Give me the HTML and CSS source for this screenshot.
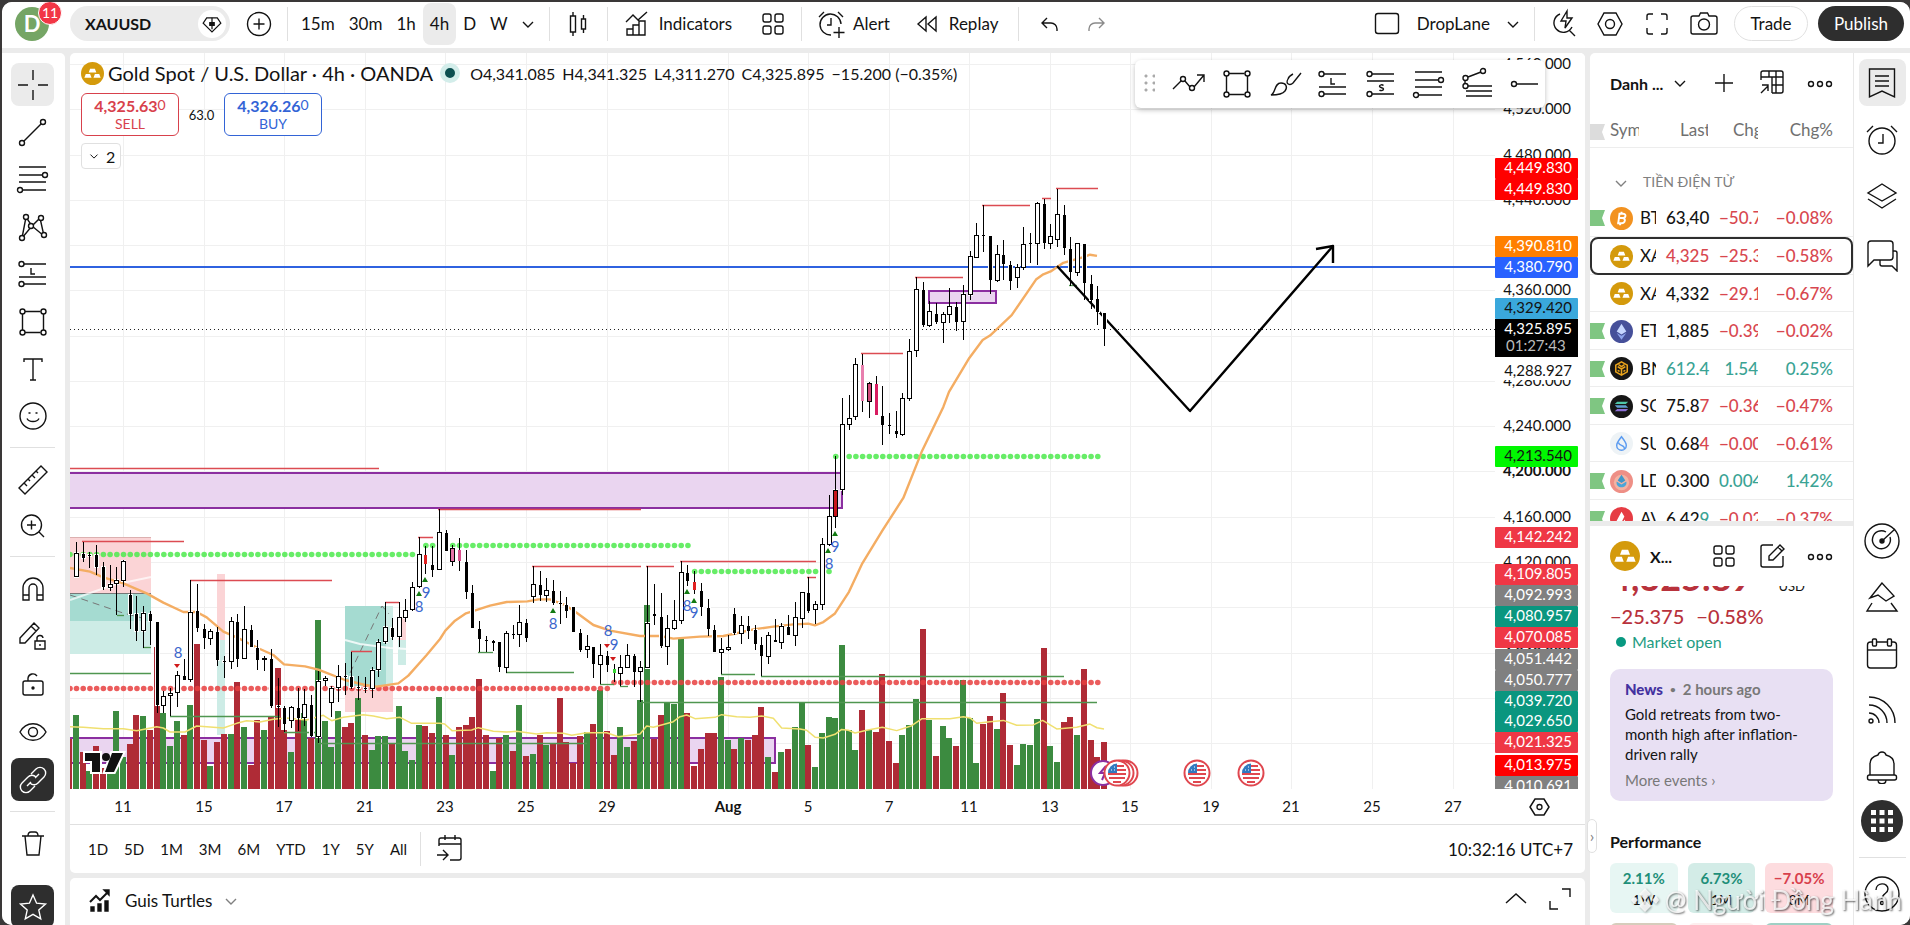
FILE: index.html
```html
<!DOCTYPE html>
<html lang="en">
<head>
    <meta charset="UTF-8">
    <meta name="viewport" content="width=device-width, initial-scale=1.0">
    <title>XAUUSD 4,325.895</title>
    <link rel="stylesheet" href="styles.css">
</head>
<body>
    <!-- Icon sprite -->
    <svg class="sprite" aria-hidden="true">
        <symbol id="i-down" viewBox="0 0 34 34"><path d="M12 15l5 5 5-5"/></symbol>
        <symbol id="i-plus-circle" viewBox="0 0 34 34"><circle cx="17" cy="17" r="11.5"/><path d="M17 11.500v11M11.500 17h11"/></symbol>
        <symbol id="i-gem" viewBox="0 0 34 34"><path d="M11 10h12l4 6-10 10L7 16z"/><path d="M17 10v13M14.500 15.500h5v3h-5z" fill="currentColor"/></symbol>
        <symbol id="i-candles" viewBox="0 0 34 34"><path d="M9.500 9h5v16h-5zM12 5v4M12 25v4M20.500 12h4v10h-4zM22.500 8v4M22.500 22v4"/></symbol>
        <symbol id="i-indicators" viewBox="0 0 34 34"><path d="M6 15l7-7 5 5 9-8M7 28v-6h6v6zM13 28V18h6v10zM19 28V14h6v14z"/></symbol>
        <symbol id="i-grid" viewBox="0 0 34 34"><rect x="7" y="7" width="8" height="8" rx="2"/><rect x="19" y="7" width="8" height="8" rx="2"/><rect x="7" y="19" width="8" height="8" rx="2"/><rect x="19" y="19" width="8" height="8" rx="2"/></symbol>
        <symbol id="i-alert" viewBox="0 0 34 34"><path d="M27 17a10.500 10.500 0 1 0-10 11M5 10l5-5M29 10l-5-5M17 11v7h-4M25 20v11M19.500 25.500h11"/></symbol>
        <symbol id="i-alarm" viewBox="0 0 34 34"><circle cx="17" cy="18" r="13"/><path d="M2 9l6-6M32 9l-6-6M18 11v9h-5"/></symbol>
        <symbol id="i-replay" viewBox="0 0 34 34"><path d="M16 10v14l-8-7zM26 10v14l-8-7z"/></symbol>
        <symbol id="i-undo" viewBox="0 0 34 34"><path d="M14 11l-5 5 5 5M9 16h9a6 6 0 0 1 6 6v2"/></symbol>
        <symbol id="i-redo" viewBox="0 0 34 34"><path d="M20 11l5 5-5 5M25 16h-9a6 6 0 0 0-6 6v2"/></symbol>
        <symbol id="i-layout" viewBox="0 0 34 34"><rect x="5.500" y="6.500" width="23" height="20" rx="2.500"/></symbol>
        <symbol id="i-quick" viewBox="0 0 34 34"><path d="M14 7a9.500 9.500 0 1 0 12 13M23 23l6 6M21 4l-6 10h5l-1 7 7-10h-5z"/></symbol>
        <symbol id="i-hex" viewBox="0 0 34 34"><path d="M11 6h12l6 11-6 11H11L5 17z"/><circle cx="17" cy="17" r="4.500"/></symbol>
        <symbol id="i-full" viewBox="0 0 34 34"><path d="M7 13V9a2 2 0 0 1 2-2h4M21 7h4a2 2 0 0 1 2 2v4M27 21v4a2 2 0 0 1-2 2h-4M13 27H9a2 2 0 0 1-2-2v-4"/></symbol>
        <symbol id="i-camera" viewBox="0 0 34 34"><path d="M12 9l1.500-3h7L22 9h6a2 2 0 0 1 2 2v14a2 2 0 0 1-2 2H6a2 2 0 0 1-2-2V11a2 2 0 0 1 2-2z"/><circle cx="17" cy="17.500" r="5.500"/></symbol>

        <symbol id="i-cross" viewBox="0 0 34 34"><path d="M17 2v10M17 22v10M2 17h10M22 17h10"/></symbol>
        <symbol id="i-trend" viewBox="0 0 34 34"><circle cx="6" cy="28" r="2.500"/><circle cx="27" cy="7" r="2.500"/><path d="M8 26L25 9"/></symbol>
        <symbol id="i-fib" viewBox="0 0 34 34"><path d="M3 5h27M3 13h24M3 20h27M6 28h24"/><circle cx="29" cy="13" r="2.500"/><circle cx="4" cy="28" r="2.500"/></symbol>
        <symbol id="i-pattern" viewBox="0 0 34 34"><path d="M6 28l4-21 6 9-10 12M16 16l8-8 4 18-12-10z"/><circle cx="6" cy="28" r="2.500" fill="#fff"/><circle cx="10" cy="7" r="2.500" fill="#fff"/><circle cx="15" cy="16" r="2.500" fill="#fff"/><circle cx="25" cy="8" r="2.500" fill="#fff"/><circle cx="28" cy="25" r="2.500" fill="#fff"/></symbol>
        <symbol id="i-long" viewBox="0 0 34 34"><path d="M8 7h22M3 20h27M8 27h22M15 11v6h4"/><circle cx="5.500" cy="7" r="2.500"/><circle cx="5.500" cy="27" r="2.500"/></symbol>
        <symbol id="i-short" viewBox="0 0 34 34"><path d="M8 7h22M3 14h27M8 27h22M19.500 18.500c-1-1-4-1-4 .800s4 1 4 2.800-3 1.800-4 .800"/><circle cx="5.500" cy="7" r="2.500"/><circle cx="5.500" cy="27" r="2.500"/></symbol>
        <symbol id="i-rect" viewBox="0 0 34 34"><path d="M9 6.500h15.500M9 27.500h15.500M6.500 9v16M27.500 9v16"/><circle cx="6.500" cy="6.500" r="2.500"/><circle cx="27.500" cy="6.500" r="2.500"/><circle cx="6.500" cy="27.500" r="2.500"/><circle cx="27.500" cy="27.500" r="2.500"/></symbol>
        <symbol id="i-text" viewBox="0 0 34 34"><path d="M8 10V7h18v3M17 7v21M14 28h6"/></symbol>
        <symbol id="i-smile" viewBox="0 0 34 34"><circle cx="17" cy="17" r="13"/><path d="M11 19.500c2 4 10 4 12 0M12.500 14h2M19.500 14h2"/></symbol>
        <symbol id="i-ruler" viewBox="0 0 34 34"><path d="M3 25L25 3l6 6L9 31zM8 20l3 3M12 16l2 2M16 12l3 3M20 8l2 2"/></symbol>
        <symbol id="i-zoom" viewBox="0 0 34 34"><circle cx="15.500" cy="16" r="10"/><path d="M23 23l5 5M15.500 11.500v9M11 16h9"/></symbol>
        <symbol id="i-magnet" viewBox="0 0 34 34"><path d="M7 28V16a10 10 0 0 1 20 0v12h-6V16a4 4 0 0 0-8 0v12zM7 23h6M21 23h6"/></symbol>
        <symbol id="i-penlock" viewBox="0 0 34 34"><path d="M4 19L18 4l5 5L9 24H4zM15 7l5 5M19 22h10v8H19zM21 22v-2a3 3 0 0 1 6-1M24 25v2"/></symbol>
        <symbol id="i-lock" viewBox="0 0 34 34"><rect x="7" y="14" width="20" height="14" rx="2"/><path d="M12 14v-3a5 5 0 0 1 9-2"/><circle cx="17" cy="21" r="1" fill="currentColor"/></symbol>
        <symbol id="i-eye" viewBox="0 0 34 34"><path d="M4 17c6-11 20-11 26 0-6 11-20 11-26 0z"/><circle cx="17" cy="17" r="4.500"/></symbol>
        <symbol id="i-link" viewBox="0 0 34 34"><path d="M15 11l5-5a5.500 5.500 0 0 1 8 8l-6 6a5.500 5.500 0 0 1-8 0M19 23l-5 5a5.500 5.500 0 0 1-8-8l6-6a5.500 5.500 0 0 1 8 0M11 23l4-4M19 15l4-4"/></symbol>
        <symbol id="i-trash" viewBox="0 0 34 34"><path d="M6 9h22M12 9c0-3 1-4 3-4h4c2 0 3 1 3 4M9 9l2 19h12l2-19"/></symbol>
        <symbol id="i-star" viewBox="0 0 34 34"><path d="M17 5l3.600 8.200 8.900.9-6.700 6 1.900 8.700L17 24.300l-7.700 4.500 1.900-8.700-6.700-6 8.900-.9z"/></symbol>

        <symbol id="i-path" viewBox="0 0 34 34"><path d="M1 22l8-8M13 14l5 6M22 20L32 8M25 8h7v7"/><circle cx="11" cy="12" r="2.500"/><circle cx="20" cy="21" r="2.500"/></symbol>
        <symbol id="i-brush" viewBox="0 0 34 34"><path d="M3 28c5-2 3-12 10-12 5 0 7 4 4 8-3 4-9 4-14 4zM20 12c-3 5 2 7 5 4l8-10M20 12c1-3 3-4 5-5"/></symbol>
        <symbol id="i-fan" viewBox="0 0 34 34"><path d="M8 10l13-5M5 13v4M8 19h24M6 24h26M6 29h26"/><circle cx="5.500" cy="11" r="2.500"/><circle cx="23" cy="4" r="2.500"/><circle cx="5.500" cy="19" r="2.500"/></symbol>
        <symbol id="i-ray" viewBox="0 0 34 34"><circle cx="6" cy="17" r="2.500"/><path d="M8.500 17H30"/></symbol>

        <symbol id="i-plus" viewBox="0 0 34 34"><path d="M17 8v18M8 17h18"/></symbol>
        <symbol id="i-table" viewBox="0 0 34 34"><path d="M6 14V7a2 2 0 0 1 2-2h18a2 2 0 0 1 2 2v18a2 2 0 0 1-2 2h-9M6 11h22M14 5v6M21 5v22M17 19h11M17 11v16M6 27l7-7M7 19h6v6"/></symbol>
        <symbol id="i-dots" viewBox="0 0 34 34"><circle cx="8" cy="18" r="2.500"/><circle cx="17" cy="18" r="2.500"/><circle cx="26" cy="18" r="2.500"/></symbol>
        <symbol id="i-edit" viewBox="0 0 34 34"><path d="M18 6H8a2 2 0 0 0-2 2v18a2 2 0 0 0 2 2h18a2 2 0 0 0 2-2V17M14 21v-4L25 6l4 4-11 11zM23 8l4 4"/></symbol>
        <symbol id="i-list" viewBox="0 0 34 34"><path d="M4.500 3h25v28l-12.500-6-12.500 6zM10 10h14M10 15h14M10 20h14"/></symbol>
        <symbol id="i-layers" viewBox="0 0 34 34"><path d="M17 3l14 9-14 8-14-8zM3 18l14 9 14-9"/></symbol>
        <symbol id="i-chat" viewBox="0 0 34 34"><path d="M3 28V6a3 3 0 0 1 3-3h19a3 3 0 0 1 3 3v13a3 3 0 0 1-3 3H9zM28 13h2a2 2 0 0 1 2 2v18l-5-5H17a2 2 0 0 1-2-2v-4"/></symbol>
        <symbol id="i-target" viewBox="0 0 36 36"><circle cx="18" cy="18" r="17"/><path d="M26 14a9 9 0 1 1-4-5M18 18L31 6"/><circle cx="18" cy="18" r="2" fill="currentColor"/></symbol>
        <symbol id="i-ideas" viewBox="0 0 34 34"><path d="M17 3L5 18l8-3 8 6 8-5zM7 23l-5 8h30l-6-8"/></symbol>
        <symbol id="i-cal" viewBox="0 0 34 34"><rect x="2.500" y="5" width="29" height="26" rx="3"/><path d="M2.500 13h29"/><rect x="7.500" y="2" width="4" height="7" rx="1" fill="#fff"/><rect x="22.500" y="2" width="4" height="7" rx="1" fill="#fff"/></symbol>
        <symbol id="i-rss" viewBox="0 0 34 34"><circle cx="6" cy="28" r="2"/><path d="M4 20a10 10 0 0 1 10 10M4 12a18 18 0 0 1 18 18M4 4a26 26 0 0 1 26 26"/></symbol>
        <symbol id="i-bell" viewBox="0 0 34 34"><path d="M5 25V14c0-5 4-8 8-9 1-4 7-4 8 0 4 1 8 4 8 9v11"/><rect x="2.500" y="25" width="29" height="5" rx="2"/><path d="M13 30c0 5 8 5 8 0"/></symbol>
        <symbol id="i-help" viewBox="0 0 36 36"><circle cx="18" cy="18" r="17"/><path d="M12 14c0-8 12-8 12-1 0 5-6 4-6 10"/><circle cx="18" cy="27" r="1.500"/></symbol>
        <symbol id="i-goto" viewBox="0 0 34 34"><path d="M6 14V8a2 2 0 0 1 2-2h18a2 2 0 0 1 2 2v18a2 2 0 0 1-2 2h-9M6 12h22M12 3v5M22 3v5M4 23h10M10 18l5 5-5 5"/></symbol>
        <symbol id="i-turtle" viewBox="0 0 34 34"><path d="M8 18l6-6 4 4 7-7" stroke-width="2"/><path d="M22 6h5v5z" fill="currentColor"/><path d="M9 23h3v4H9zM16 20h3v7h-3zM23 17h3v10h-3z" fill="currentColor"/></symbol>
        <symbol id="i-up" viewBox="0 0 34 34"><path d="M7 21l10-9 10 9"/></symbol>
        <symbol id="i-expand" viewBox="0 0 34 34"><path d="M19 7h8v8M7 19v8h8"/></symbol>
        <symbol id="i-gold" viewBox="0 0 24 24"><circle cx="12" cy="12" r="12" fill="#d49a0c" stroke="none"/><path d="M9.500 7h5l1.500 4H8zM5 12.500h4.500l1.500 4H3.500zM14.500 12.500H19l1.500 4H13z" fill="#fff" stroke="none"/></symbol>
        <symbol id="i-flag" viewBox="0 0 15 16"><path d="M0 0h15l-3 8 3 8H0z" fill="currentColor" stroke="none"/></symbol>
    </svg>

    <div class="app">
        <!-- Top toolbar -->
        <header class="topbar">
            <div class="avatar">D<span class="badge">11</span></div>
            <button class="symbol-search"><span>XAUUSD</span><span class="gem"><svg class="ic"><use href="#i-gem"/></svg></span></button>
            <button class="tool" aria-label="Compare"><svg class="ic"><use href="#i-plus-circle"/></svg></button>
            <i class="sep"></i>
            <div class="intervals">
                <button>15m</button><button>30m</button><button>1h</button><button class="active">4h</button><button>D</button><button>W</button>
                <button class="more" aria-label="More intervals"><svg class="ic"><use href="#i-down"/></svg></button>
            </div>
            <i class="sep"></i>
            <button class="tool wide" aria-label="Candles"><svg class="ic"><use href="#i-candles"/></svg></button>
            <i class="sep"></i>
            <button class="labeled indicators"><svg class="ic"><use href="#i-indicators"/></svg>Indicators</button>
            <button class="tool wide" aria-label="Templates"><svg class="ic"><use href="#i-grid"/></svg></button>
            <i class="sep"></i>
            <button class="labeled alert"><svg class="ic"><use href="#i-alert"/></svg>Alert</button>
            <button class="labeled replay"><svg class="ic"><use href="#i-replay"/></svg>Replay</button>
            <i class="sep"></i>
            <button class="tool wide" aria-label="Undo"><svg class="ic"><use href="#i-undo"/></svg></button>
            <button class="tool redo" aria-label="Redo"><svg class="ic"><use href="#i-redo"/></svg></button>

            <div class="top-right">
                <button class="labeled layout"><svg class="ic"><use href="#i-layout"/></svg>DropLane<svg class="ic"><use href="#i-down"/></svg></button>
                <i class="sep"></i>
                <button class="tool" aria-label="Quick search"><svg class="ic"><use href="#i-quick"/></svg></button>
                <button class="tool" aria-label="Settings"><svg class="ic"><use href="#i-hex"/></svg></button>
                <button class="tool" aria-label="Fullscreen"><svg class="ic"><use href="#i-full"/></svg></button>
                <button class="tool" aria-label="Snapshot"><svg class="ic"><use href="#i-camera"/></svg></button>
                <button class="pill trade">Trade</button>
                <button class="pill publish">Publish</button>
            </div>
        </header>

        <!-- Drawing tools -->
        <nav class="drawbar">
            <div class="group g1">
                <button class="on" aria-label="Cross"><svg class="ic"><use href="#i-cross"/></svg></button>
                <button aria-label="Trend line"><svg class="ic"><use href="#i-trend"/></svg></button>
                <button aria-label="Fib retracement"><svg class="ic"><use href="#i-fib"/></svg></button>
                <button aria-label="XABCD pattern"><svg class="ic"><use href="#i-pattern"/></svg></button>
                <button aria-label="Long position"><svg class="ic"><use href="#i-long"/></svg></button>
                <button aria-label="Rectangle"><svg class="ic"><use href="#i-rect"/></svg></button>
                <button aria-label="Text"><svg class="ic"><use href="#i-text"/></svg></button>
                <button aria-label="Icon"><svg class="ic"><use href="#i-smile"/></svg></button>
            </div>
            <div class="group g2">
                <button aria-label="Measure"><svg class="ic"><use href="#i-ruler"/></svg></button>
                <button aria-label="Zoom in"><svg class="ic"><use href="#i-zoom"/></svg></button>
            </div>
            <div class="group g3">
                <button aria-label="Magnet"><svg class="ic"><use href="#i-magnet"/></svg></button>
                <button aria-label="Stay in drawing mode"><svg class="ic"><use href="#i-penlock"/></svg></button>
                <button aria-label="Lock all"><svg class="ic"><use href="#i-lock"/></svg></button>
                <button aria-label="Hide all"><svg class="ic"><use href="#i-eye"/></svg></button>
                <button class="dark" aria-label="Sync drawings"><svg class="ic"><use href="#i-link"/></svg></button>
            </div>
            <div class="group g4">
                <button aria-label="Remove"><svg class="ic"><use href="#i-trash"/></svg></button>
                <button class="dark" aria-label="Favorites"><svg class="ic"><use href="#i-star"/></svg></button>
            </div>
        </nav>

        <!-- Chart -->
        <main class="main">
            <section class="chart-card">
                <div class="chart-area">
                    <svg id="chart" viewBox="70 53 1515 771" preserveAspectRatio="xMinYMin slice"></svg>
                    <div class="legend">
                        <div class="legend-title">
                            <svg class="gold"><use href="#i-gold"/></svg>
                            <h1>Gold Spot / U.S. Dollar · 4h · OANDA</h1>
                            <span class="status"></span>
                            <p class="ohlc"><span>O4,341.085</span><span>H4,341.325</span><span>L4,311.270</span><span>C4,325.895</span><span>−15.200 (−0.35%)</span></p>
                        </div>
                        <div class="quotes">
                            <button class="sell"><b>4,325.63<sup>0</sup></b>SELL</button>
                            <span class="spread">63.0</span>
                            <button class="buy"><b>4,326.26<sup>0</sup></b>BUY</button>
                        </div>
                        <button class="collapse"><svg class="ic"><use href="#i-down"/></svg>2</button>
                    </div>
                    <div class="floatbar">
                        <span class="grip"></span>
                        <button aria-label="Path"><svg class="ic"><use href="#i-path"/></svg></button>
                        <button aria-label="Rectangle"><svg class="ic"><use href="#i-rect"/></svg></button>
                        <button aria-label="Brush"><svg class="ic"><use href="#i-brush"/></svg></button>
                        <button aria-label="Long position"><svg class="ic"><use href="#i-long"/></svg></button>
                        <button aria-label="Short position"><svg class="ic"><use href="#i-short"/></svg></button>
                        <button aria-label="Fib retracement"><svg class="ic"><use href="#i-fib"/></svg></button>
                        <button aria-label="Fib extension"><svg class="ic"><use href="#i-fan"/></svg></button>
                        <button aria-label="Horizontal ray"><svg class="ic"><use href="#i-ray"/></svg></button>
                    </div>
                </div>
                <div class="ranges">
                    <button>1D</button><button>5D</button><button>1M</button><button>3M</button><button>6M</button><button>YTD</button><button>1Y</button><button>5Y</button><button>All</button>
                    <i class="sep"></i>
                    <button class="goto" aria-label="Go to"><svg class="ic"><use href="#i-goto"/></svg></button>
                    <time>10:32:16 UTC+7</time>
                </div>
            </section>
            <section class="bottom-card">
                <button class="strategy"><svg class="ic"><use href="#i-turtle"/></svg>Guis Turtles<svg class="ic muted"><use href="#i-down"/></svg></button>
                <div class="bottom-actions">
                    <button aria-label="Open panel"><svg class="ic"><use href="#i-up"/></svg></button>
                    <button aria-label="Maximize panel"><svg class="ic"><use href="#i-expand"/></svg></button>
                </div>
            </section>
        </main>

        <!-- Watchlist and details -->
        <aside class="side">
            <button class="handle" aria-label="Hide panel">›</button>
            <div class="panels">
                <section class="watchlist">
                    <div class="panel-head">
                        <h2>Danh ...</h2>
                        <svg class="ic"><use href="#i-down"/></svg>
                        <button class="first" aria-label="Add symbol"><svg class="ic"><use href="#i-plus"/></svg></button>
                        <button aria-label="Advanced view"><svg class="ic"><use href="#i-table"/></svg></button>
                        <button aria-label="More"><svg class="ic"><use href="#i-dots"/></svg></button>
                    </div>
                    <table>
                        <thead>
                            <tr><th class="c-icon"><svg class="flag grey"><use href="#i-flag"/></svg></th><th class="c-sym"><span>Sym</span></th><th class="c-last"><span>Last</span></th><th class="c-chg"><span>Chg</span></th><th class="c-pct">Chg%</th></tr>
                        </thead>
                        <tbody>
                            <tr class="section"><td colspan="5"><svg class="ic muted"><use href="#i-down"/></svg>TIỀN ĐIỆN TỬ</td></tr>
                            <tr><td class="c-icon"><svg class="flag"><use href="#i-flag"/></svg><svg class="coin" viewBox="0 0 24 24"><circle cx="12" cy="12" r="12" fill="#f29220"/><path d="M10 6.500l-1.500 11M9 7h4.500c4 0 3 4.500 0 4.500h-4M13 11.500c4 0 3 5.500-1 5.500H7.500M12 5v2M10.500 17v2" fill="none" stroke="#fff" stroke-width="2"/></svg></td><td class="c-sym"><span>BTC</span></td><td class="c-last">63,40</td><td class="c-chg dn"><span>−50.7</span></td><td class="c-pct dn">−0.08%</td></tr>
                            <tr class="selected"><td class="c-icon"><svg class="coin"><use href="#i-gold"/></svg></td><td class="c-sym"><span>XAU</span></td><td class="c-last dn">4,325</td><td class="c-chg dn"><span>−25.3</span></td><td class="c-pct dn">−0.58%</td></tr>
                            <tr><td class="c-icon"><svg class="coin"><use href="#i-gold"/></svg></td><td class="c-sym"><span>XAU</span></td><td class="c-last">4,332</td><td class="c-chg dn"><span>−29.1</span></td><td class="c-pct dn">−0.67%</td></tr>
                            <tr><td class="c-icon"><svg class="flag"><use href="#i-flag"/></svg><svg class="coin" viewBox="0 0 24 24"><circle cx="12" cy="12" r="12" fill="#46509a"/><path d="M12 4l5 8-5 3-5-3z" fill="#c6d6ff"/><path d="M7 13.500l5 3 5-3-5 7z" fill="#8fa6ee"/></svg></td><td class="c-sym"><span>ETH</span></td><td class="c-last">1,885</td><td class="c-chg dn"><span>−0.39</span></td><td class="c-pct dn">−0.02%</td></tr>
                            <tr><td class="c-icon"><svg class="flag"><use href="#i-flag"/></svg><svg class="coin" viewBox="0 0 24 24"><circle cx="12" cy="12" r="12" fill="#161616"/><path d="M12 5l6 3.500v7L12 19l-6-3.500v-7zM8 10l4 2.500 4-2.500M12 12.500V19M9 8l3 2 3-2M8 14l2 1M16 14l-2 1" fill="none" stroke="#e9a31b" stroke-width="1.600"/></svg></td><td class="c-sym"><span>BNB</span></td><td class="c-last up">612.4</td><td class="c-chg up"><span>1.54</span></td><td class="c-pct up">0.25%</td></tr>
                            <tr><td class="c-icon"><svg class="flag"><use href="#i-flag"/></svg><svg class="coin" viewBox="0 0 24 24"><circle cx="12" cy="12" r="12" fill="#161616"/><path d="M7.500 7H19l-2.500 2.500H5z" fill="#4ec7a8"/><path d="M5 10.700h11.500l2.500 2.600H7.500z" fill="#5f9fd0"/><path d="M7.500 14.500H19L16.500 17H5z" fill="#8c6fd6"/></svg></td><td class="c-sym"><span>SOL</span></td><td class="c-last">75.8<em class="dn">7</em></td><td class="c-chg dn"><span>−0.36</span></td><td class="c-pct dn">−0.47%</td></tr>
                            <tr><td class="c-icon"><svg class="coin" viewBox="0 0 24 24"><circle cx="12" cy="12" r="12" fill="#eef3f6"/><path d="M12 5c3 4 5 6 5 9a5 5 0 0 1-10 0c0-3 2-5 5-9zM9 11c0 4 7 2 6 7" fill="none" stroke="#5b9bf0" stroke-width="1.500"/></svg></td><td class="c-sym"><span>SUI</span></td><td class="c-last">0.68<em class="dn">4</em></td><td class="c-chg dn"><span>−0.00</span></td><td class="c-pct dn">−0.61%</td></tr>
                            <tr><td class="c-icon"><svg class="flag"><use href="#i-flag"/></svg><svg class="coin" viewBox="0 0 24 24"><circle cx="12" cy="12" r="12" fill="#ee8f86"/><circle cx="12" cy="13" r="8" fill="#f3b3a3"/><path d="M12 5l4 6-4 2.500L8 11z" fill="#3f97c9"/><path d="M7 12l5 3 5-3c2 8-12 8-10 0z" fill="#4aa5d8"/></svg></td><td class="c-sym"><span>LDO</span></td><td class="c-last">0.300</td><td class="c-chg up"><span>0.004</span></td><td class="c-pct up">1.42%</td></tr>
                            <tr><td class="c-icon"><svg class="flag"><use href="#i-flag"/></svg><svg class="coin" viewBox="0 0 24 24"><circle cx="12" cy="12" r="12" fill="#e63c44"/><path d="M12 5l3 5-4 8H5zM15 13l3 5h-5z" fill="#fff"/></svg></td><td class="c-sym"><span>AVA</span></td><td class="c-last">6.42<em class="up">9</em></td><td class="c-chg dn"><span>−0.02</span></td><td class="c-pct dn">−0.37%</td></tr>
                        </tbody>
                    </table>
                </section>

                <section class="details">
                    <div class="panel-head">
                        <svg class="gold big"><use href="#i-gold"/></svg>
                        <h2>X...</h2>
                        <button class="first" aria-label="Widgets"><svg class="ic"><use href="#i-grid"/></svg></button>
                        <button aria-label="Edit"><svg class="ic"><use href="#i-edit"/></svg></button>
                        <button aria-label="More"><svg class="ic"><use href="#i-dots"/></svg></button>
                    </div>
                    <div class="details-scroll">
                        <div class="price"><strong>4,325.89</strong><span>USD</span></div>
                        <p class="change"><span>−25.375</span><span>−0.58%</span></p>
                        <p class="market">Market open</p>
                        <article class="news">
                            <p class="news-meta"><b>News</b><i>•</i><span>2 hours ago</span></p>
                            <p class="news-text">Gold retreats from two-month high after inflation-driven rally</p>
                            <a href="#">More events ›</a>
                        </article>
                        <h3>Performance</h3>
                        <div class="perf">
                            <div class="p1"><b>2.11%</b>1W</div>
                            <div class="p2"><b>6.73%</b>1M</div>
                            <div class="p3"><b>−7.05%</b>3M</div>
                            <div class="p4"></div>
                            <div class="p5"></div>
                            <div class="p6"></div>
                        </div>
                    </div>
                </section>
            </div>

            <nav class="rail">
                <div class="group r1">
                    <button class="on" aria-label="Watchlist"><svg class="ic"><use href="#i-list"/></svg></button>
                    <button aria-label="Alerts"><svg class="ic"><use href="#i-alarm"/></svg></button>
                    <button aria-label="Object tree"><svg class="ic"><use href="#i-layers"/></svg></button>
                    <button aria-label="Chats"><svg class="ic"><use href="#i-chat"/></svg></button>
                </div>
                <div class="group r2">
                    <button aria-label="Screeners"><svg class="ic large"><use href="#i-target"/></svg></button>
                    <button aria-label="Pine"><svg class="ic"><use href="#i-ideas"/></svg></button>
                    <button aria-label="Calendar"><svg class="ic"><use href="#i-cal"/></svg></button>
                    <button aria-label="News flow"><svg class="ic"><use href="#i-rss"/></svg></button>
                    <button aria-label="Notifications"><svg class="ic"><use href="#i-bell"/></svg></button>
                    <button class="apps" aria-label="Products"><svg viewBox="0 0 24 24"><path d="M1 1h5v5H1zM9.500 1h5v5h-5zM18 1h5v5h-5zM1 9.500h5v5H1zM9.500 9.500h5v5h-5zM18 9.500h5v5h-5zM1 18h5v5H1zM9.500 18h5v5h-5zM18 18h5v5h-5z" fill="#fff"/></svg></button>
                </div>
                <div class="group r3">
                    <button aria-label="Help"><svg class="ic large"><use href="#i-help"/></svg></button>
                </div>
            </nav>
        </aside>
    </div>

    <div class="watermark"><svg viewBox="0 0 28 28"><path d="M14 2l6 6-6 6-6-6zM14 14l6 6-6 6-6-6zM3 10l4 4-4 4-3-4zM25 10l3 4-3 4-4-4z" fill="currentColor"/></svg>@ Người Đồng Hành</div>

    <script src="chart.js"></script>
</body>
</html>
```

FILE: styles.css
```css
* {
    box-sizing: border-box;
}
body {
    margin: 0;
    padding: 2px 0 0 2px;
    height: 100vh;
    overflow: hidden;
    background: #3a3838;
    color: #131313;
    font-family: "Trebuchet MS", Lato, "Noto Sans", sans-serif;
    font-size: 16px;
}
h1, h2, h3, p {
    margin: 0;
}
button {
    padding: 0;
    border: none;
    background: none;
    color: inherit;
    font: inherit;
    cursor: pointer;
}
.sprite {
    position: absolute;
    width: 0;
    height: 0;
}
.ic {
    width: 34px;
    height: 34px;
    flex: none;
    fill: none;
    stroke: currentColor;
    stroke-width: 1.4;
}
.ic.large {
    width: 36px;
    height: 36px;
}
.muted {
    color: #808080;
}
.sep {
    width: 1px;
    height: 34px;
    background: #e0e0e0;
    flex: none;
}
.app {
    display: grid;
    grid-template-columns: 63px minmax(0, 1fr) 320px;
    grid-template-rows: 46px minmax(0, 1fr);
    gap: 5px;
    height: 100%;
    background: #ebebeb;
    border-radius: 10px;
    overflow: hidden;
}

/* Top toolbar */
.topbar {
    grid-column: 1 / -1;
    display: flex;
    align-items: center;
    padding: 0 6px 3px 13px;
    background: #fff;
    font-size: 17px;
    white-space: nowrap;
}
.topbar button {
    display: flex;
    align-items: center;
    justify-content: center;
}
.avatar {
    position: relative;
    width: 34px;
    height: 34px;
    margin-right: 21px;
    border-radius: 50%;
    background: #75a565;
    color: #fff;
    font-size: 22px;
    font-weight: bold;
    line-height: 34px;
    text-align: center;
}
.badge {
    position: absolute;
    top: -6px;
    right: -13px;
    width: 24px;
    height: 24px;
    border: 1px solid #fff;
    border-radius: 50%;
    background: #f23645;
    font-size: 14px;
    font-weight: normal;
    line-height: 22px;
}
.topbar .symbol-search {
    justify-content: space-between;
    width: 160px;
    height: 35px;
    padding: 0 4px 0 15px;
    border-radius: 18px;
    background: #ebebeb;
    font-size: 16px;
    font-weight: bold;
}
.gem {
    display: flex;
    align-items: center;
    justify-content: center;
    width: 28px;
    height: 28px;
    border-radius: 50%;
    background: #fff;
}
.gem .ic {
    width: 30px;
    height: 30px;
}
.tool {
    width: 47px;
    height: 42px;
}
.symbol-search + .tool {
    width: 57px;
}
.tool.wide {
    width: 57px;
}
.redo {
    width: 36px;
    color: #8a8a8a;
}
.intervals {
    display: flex;
    padding-left: 6px;
}
.intervals button {
    height: 42px;
    padding: 0 7px;
    border-radius: 8px;
}
.intervals .active {
    background: #ebebeb;
}
.intervals .more {
    width: 26px;
    margin-right: 8px;
}
.labeled .ic {
    margin-right: 5px;
}
.indicators {
    padding-left: 12px;
}
.indicators + .tool {
    margin-left: 13px;
    width: 56px;
}
.alert {
    padding-left: 12px;
}
.replay {
    padding: 0 20px 0 20px;
}
.replay + .sep {
    margin-right: 2px;
}
.top-right {
    display: flex;
    align-items: center;
    margin-left: auto;
}
.layout .ic {
    margin-right: 13px;
}
.layout .ic:last-child {
    margin: 0 4px 0 6px;
}
.layout + .sep {
    margin-right: 4px;
}
.pill {
    height: 35px;
    border-radius: 18px;
    font-size: 17px;
}
.trade {
    width: 74px;
    margin: 0 10px 0 7px;
}
.topbar .trade {
    border: 1px solid #e0e0e0;
}
.publish {
    width: 86px;
    color: #fff;
}
.topbar .publish {
    background: #2e2e2e;
}

/* Left drawing bar */
.drawbar {
    display: flex;
    flex-direction: column;
    padding: 10px 10px 0 8px;
    background: #fff;
    border-radius: 0 5px 0 0;
    overflow: hidden;
}
.group {
    display: flex;
    flex-direction: column;
    justify-content: space-between;
    flex: none;
}
.drawbar button {
    display: flex;
    align-items: center;
    justify-content: center;
    width: 43px;
    height: 43px;
    margin: 0 auto;
    border-radius: 8px;
}
.g1 {
    height: 375px;
}
.g2 {
    height: 89px;
}
.g3 {
    height: 234px;
}
.g4 {
    height: 106px;
}
.g2, .g3, .g4 {
    position: relative;
    margin-top: 20px;
}
.g4 {
    margin-top: 21px;
}
.g2::before, .g3::before, .g4::before {
    content: "";
    position: absolute;
    top: -11px;
    left: 0;
    right: 0;
    height: 1px;
    background: #e0e0e0;
}
.drawbar .on {
    background: #ebebeb;
}
.drawbar .dark {
    background: #2e2e2e;
    color: #fff;
}

/* Chart */
.main {
    display: flex;
    flex-direction: column;
    gap: 5px;
    min-width: 0;
}
.chart-card {
    display: flex;
    flex-direction: column;
    flex: 1;
    min-height: 0;
    background: #fff;
    border-radius: 5px;
    overflow: hidden;
}
.chart-area {
    position: relative;
    flex: 1;
    min-height: 0;
}
#chart {
    display: block;
    width: 100%;
    height: 100%;
}
#chart text {
    font-size: 15px;
    fill: #131313;
}
#chart .sig {
    fill: #3a66cc;
}
.legend {
    position: absolute;
    top: 8px;
    left: 11px;
}
.legend-title {
    display: flex;
    align-items: center;
    height: 24px;
}
.gold {
    width: 23px;
    height: 23px;
    flex: none;
}
.gold.big {
    width: 30px;
    height: 30px;
}
.legend h1 {
    margin: 0 7px 0 4px;
    font-size: 20px;
    font-weight: normal;
}
.status {
    width: 20px;
    height: 20px;
    border: 5px solid #d3edea;
    border-radius: 50%;
    background: #0c4f50;
}
.ohlc {
    display: flex;
    gap: 7px;
    margin-left: 10px;
    font-size: 16px;
}
.quotes {
    display: flex;
    align-items: center;
    margin: 8px 0 7px;
}
.quotes button {
    width: 98px;
    height: 43px;
    border: 1px solid;
    border-radius: 6px;
    background: #fff;
    font-size: 14px;
    line-height: 18px;
}
.quotes b {
    display: block;
    font-size: 16px;
}
.quotes sup {
    font-size: 14px;
    font-weight: normal;
    line-height: 0;
    vertical-align: 2px;
}
.sell {
    color: #d8414c;
}
.buy {
    color: #3364d6;
}
.spread {
    width: 45px;
    font-size: 13px;
    text-align: center;
}
.collapse {
    display: flex;
    align-items: center;
    width: 40px;
    height: 26px;
    border: 1px solid #e0e0e0;
    border-radius: 4px;
    background: #fff;
}
.collapse .ic {
    width: 24px;
}
.floatbar {
    position: absolute;
    top: 7px;
    right: 40px;
    display: flex;
    align-items: center;
    gap: 14px;
    height: 48px;
    padding: 0 3px 0 9px;
    border-radius: 6px;
    background: #fff;
    box-shadow: 0 2px 5px rgba(0, 0, 0, 0.25);
}
.floatbar button {
    width: 34px;
    height: 34px;
}
.grip {
    width: 11px;
    height: 20px;
    margin-right: 3px;
    background: radial-gradient(circle at 2px 2px, #aaa 1px, transparent 2px) 0 0 / 8px 7px;
}
.ranges {
    display: flex;
    align-items: center;
    height: 49px;
    padding: 0 12px 0 10px;
    border-top: 1px solid #e0e0e0;
    font-size: 15px;
}
.ranges button {
    padding: 0 8px;
}
.ranges .sep {
    margin-left: 5px;
}
.ranges .goto {
    display: flex;
    padding: 0 12px;
}
.ranges time {
    margin-left: auto;
    font-size: 17px;
}
.bottom-card {
    display: flex;
    align-items: center;
    justify-content: space-between;
    height: 47px;
    padding: 0 8px 2px 12px;
    background: #fff;
    border-radius: 5px 5px 0 0;
    font-size: 17px;
}
.strategy {
    display: flex;
    align-items: center;
}
.strategy .ic:first-child {
    margin-right: 9px;
}
.strategy .muted {
    margin-left: 2px;
}
.bottom-actions {
    display: flex;
    gap: 10px;
}

/* Right side */
.side {
    position: relative;
    display: flex;
    min-height: 0;
}
.handle {
    position: absolute;
    top: 766px;
    left: -3px;
    z-index: 2;
    width: 10px;
    height: 34px;
    border: 1px solid #e0e0e0;
    border-radius: 5px;
    background: #fff;
    color: #808080;
    line-height: 28px;
}
.panels {
    display: flex;
    flex-direction: column;
    flex: 1;
    gap: 5px;
    min-height: 0;
    min-width: 0;
}
.watchlist {
    height: 468px;
    flex: none;
    background: #fff;
    border-radius: 5px 0 0 0;
    overflow: hidden;
}
.panel-head {
    display: flex;
    align-items: center;
    height: 60px;
    padding: 0 9px 0 20px;
}
.panel-head h2 {
    font-size: 16px;
    font-weight: bold;
    white-space: nowrap;
}
.panel-head button {
    width: 48px;
    height: 34px;
    flex: none;
}
.panel-head .first {
    margin-left: auto;
}
.details .panel-head h2 {
    margin-left: 10px;
}
table {
    width: 100%;
    table-layout: fixed;
    border-collapse: collapse;
    font-size: 17px;
}
th {
    height: 34px;
    color: #707070;
    font-weight: normal;
    text-align: left;
}
thead tr, tbody tr {
    border-bottom: 1px solid #ededed;
}
th, td {
    padding: 0;
    white-space: nowrap;
}
td {
    height: 37px;
}
tbody tr:nth-child(odd) td {
    height: 38px;
}
tbody .section td {
    height: 54px;
    padding: 18px 0 0 14px;
    color: #808080;
    font-size: 14px;
}
.section .ic {
    margin-right: 5px;
    vertical-align: middle;
}
.section {
    border-bottom: none;
}
.c-icon {
    width: 50px;
}
.c-icon svg {
    vertical-align: middle;
}
.c-sym {
    width: 26px;
}
.c-last {
    width: 53px;
}
.c-chg {
    width: 47px;
}
.c-sym span, .c-chg span, .c-last span {
    display: block;
    overflow: hidden;
}
.c-sym span {
    width: 16px;
}
th.c-sym span {
    width: 29px;
    margin-left: -30px;
}
th.c-last span {
    width: 28px;
    margin-left: 14px;
}
th.c-chg span {
    width: 25px;
    margin-left: 14px;
}
.c-chg span {
    width: 39px;
}
.c-chg.up span {
    text-align: right;
}
.c-pct, th.c-pct {
    padding-right: 20px;
    text-align: right;
}
.flag {
    width: 15px;
    height: 16px;
    margin-right: 5px;
    color: #7fc682;
}
.flag.grey {
    color: #dcdcdc;
}
.coin {
    width: 23px;
    height: 23px;
}
.coin:first-child {
    margin-left: 20px;
}
em {
    font-style: normal;
}
.dn {
    color: #d8474f;
}
.up {
    color: #3aa394;
}
.c-pct, .c-last, .c-chg {
    font-weight: 500;
}
th.c-pct, th.c-last, th.c-chg {
    font-weight: normal;
}
.selected {
    outline: 2px solid #2e2e2e;
    outline-offset: -2px;
    border-radius: 8px;
}

.details {
    display: flex;
    flex-direction: column;
    flex: 1;
    min-height: 0;
    background: #fff;
}
.details-scroll {
    flex: 1;
    min-height: 0;
    padding: 0 20px;
    overflow: hidden;
    clip-path: inset(0);
}
.price {
    display: flex;
    align-items: baseline;
    justify-content: space-between;
    height: 42px;
    margin-top: -30px;
    padding-right: 28px;
    line-height: 42px;
}
.price strong {
    color: #b8323c;
    font-size: 36px;
}
.price span {
    font-size: 13px;
}
.change {
    display: flex;
    gap: 12px;
    margin-top: 5px;
    color: #b8323c;
    font-size: 20px;
    font-weight: 500;
    line-height: 26px;
}
.market {
    margin: 0 0 14px 22px;
    color: #1f9c83;
    font-size: 16px;
    line-height: 26px;
}
.market::before {
    content: "";
    float: left;
    width: 10px;
    height: 10px;
    margin: 8px 0 0 -16px;
    border-radius: 50%;
    background: #089981;
}
.news {
    padding: 10px 15px 11px;
    border-radius: 10px;
    background: #e8e0f3;
    font-size: 15px;
    line-height: 20px;
}
.news-meta {
    display: flex;
    gap: 7px;
    margin-bottom: 5px;
    color: #787878;
    font-weight: bold;
}
.news-meta b {
    color: #4432a0;
}
.news-meta i {
    font-size: 10px;
    font-style: normal;
}
.news a {
    display: block;
    margin-top: 6px;
    color: #787878;
    text-decoration: none;
}
h3 {
    margin: 31px 0 11px;
    font-size: 16px;
    line-height: 20px;
}
.perf {
    display: grid;
    grid-template-columns: repeat(3, 1fr);
    gap: 10px;
}
.perf div {
    height: 50px;
    padding-top: 5px;
    border-radius: 6px;
    font-size: 14px;
    line-height: 21px;
    text-align: center;
}
.perf b {
    display: block;
    font-size: 15px;
}
.p1 {
    background: #e7f6f3;
}
.p2 {
    background: #d3ece7;
}
.p1 b, .p2 b {
    color: #1f8f79;
}
.p3 {
    background: #fddcdf;
}
.p3 b {
    color: #d8404c;
}
.p4 {
    background: #d6cdbc;
}
.p5 {
    background: #fdeeee;
}
.p6 {
    background: #9fcfc4;
}

.rail {
    display: flex;
    flex-direction: column;
    align-items: center;
    flex: none;
    width: 57px;
    padding-top: 6px;
    background: #fff;
    border-left: 1px solid #e8e8e8;
}
.rail button {
    display: flex;
    align-items: center;
    justify-content: center;
    width: 47px;
    height: 47px;
    border-radius: 8px;
}
.rail .on {
    background: #ebebeb;
}
.r1 {
    height: 220px;
}
.r2 {
    height: 325px;
    margin-top: 238px;
}
.r3 {
    margin-top: 15px;
    padding-top: 12px;
    border-top: 1px solid #e0e0e0;
}
.rail .apps {
    width: 42px;
    height: 42px;
    margin: 0 auto;
    border-radius: 50%;
    background: #2e2e2e;
}
.apps svg {
    width: 24px;
    height: 24px;
}
.watermark {
    position: fixed;
    right: 8px;
    bottom: 9px;
    display: flex;
    align-items: center;
    gap: 6px;
    color: rgba(255, 255, 255, 0.8);
    font-size: 26px;
    line-height: 32px;
    text-shadow: 1px 1px 2px rgba(0, 0, 0, 0.6);
    pointer-events: none;
}
.watermark svg {
    width: 28px;
    height: 28px;
    filter: drop-shadow(1px 1px 1px rgba(0, 0, 0, 0.4));
}
```

FILE: chart.js
```js
const svg = document.getElementById('chart');
let out = '';

const STEP = 6.719;
const barX = i => 76 + STEP * i;

const yA = v => 440 + v / 3;
const yB = v => 160 + v / 2.45;

function rect(x, y, w, h, fill, extra = '') {
    out += `<rect x="${x}" y="${y}" width="${w}" height="${h}" fill="${fill}" ${extra}/>`;
}
function line(x1, y1, x2, y2, color, width = 1, extra = '') {
    out += `<path d="M${x1} ${y1}L${x2} ${y2}" stroke="${color}" stroke-width="${width}" fill="none" ${extra}/>`;
}
function poly(points, color, width, extra = '') {
    out += `<polyline points="${points.map(p => p.join(',')).join(' ')}" stroke="${color}" stroke-width="${width}" fill="none" stroke-linejoin="round" ${extra}/>`;
}
function label(x, y, text, extra = '') {
    out += `<text x="${x}" y="${y}" ${extra}>${text}</text>`;
}

// Grid
const days = [[123, '11'], [204, '15'], [284, '17'], [365, '21'], [445, '23'], [526, '25'], [607, '29'], [728, 'Aug'], [808, '5'],
    [889, '7'], [969, '11'], [1050, '13'], [1130, '15'], [1211, '19'], [1291, '21'], [1372, '25'], [1453, '27']];
days.forEach(d => line(d[0] + .5, 53, d[0] + .5, 789, '#f0f0f0'));
for (let k = 0; k < 16; k++) {
    const y = Math.round(64 + 45.27 * k) + .5;
    line(70, y, 1495, y, '#f0f0f0');
}

// Zones
const purple = 'stroke="#8b2fa0" stroke-width="2"';
rect(60, 473, 782, 35, '#ead5f0', purple);
rect(60, 738, 715, 25, '#ead5f0', purple);
rect(929, 291, 67, 12, '#ead5f0', purple);
rect(70, 537, 81, 56, '#fbd4d6');
rect(70, 593, 81, 28, '#a5dbd1');
rect(70, 621, 81, 33, '#cdece6');
line(70, 537.5, 151, 537.5, '#dcb0b0');
line(70, 593.5, 151, 593.5, '#777');
rect(217, 574, 8, 66, '#fbd4d6');
rect(217, 640, 8, 95, '#cdece6');
rect(345, 606, 41, 80, '#a5dbd1');
rect(386, 606, 7, 80, '#cdece6');
rect(345, 686, 48, 26, '#fbd4d6');
rect(398, 618, 8, 22, '#fbd4d6');
rect(398, 640, 8, 25, '#cdece6');
poly([[70, 595], [123, 613], [150, 620]], '#777', 1, 'stroke-dasharray="7 5"');
poly([[350, 673], [382, 606], [389, 614]], '#777', 1, 'stroke-dasharray="7 5"');
poly([[70, 600], [113, 585], [151, 577]], '#fff', 2, 'opacity=".7"');

// Volume
const volA = 'g825 r936 g993 r918 r985 g985 g813 g950 r912 r825 g828 r870 r622 g818 g918 g843 r885 g795 r612 r900 g978 r906 r882 g882 r727 g861 r975 r841 g870 r828 r685 r870 g936 r840 g818 r893 g540 g843 g921 g813 r861 r849 g774 r885 g930 g888 g888 r909 g798 g933 g960 g855 r858 r880 g771 r885 g945 r861 r855 r831 r717 r885 g993 r895 g885 r933 g795 r948 g942 r885 g915 r909 r774 r906 r970 r888 g876 r852 g750 r873 r945 g861 g921 r903 g780 g495 r897 r825 g787 g792 g597 r820 r978 r927 r879 r879 g711 g900 r927 g894 r900 r885 r801 g951 r996 g936 r927 g861 g787 r915 g981 g879 g831 g834 g615'.split(' ');
const volB = 'g1397 g1445 r1347 g1397 r1401 r1259 r1423 r1477 g1409 g1384 g1321 r1149 g1372 r1460 g1387 g1416 r1436 g1274 g1368 g1477 r1382 r1362 g1394 r1306 r1433 g1482 g1431 g1433 g1370 r1196 g1436 g1475 r1377 r1365 g1409 r1247 r1421 r1463 r1426'.split(' ');
function volume(list, start, y) {
    list.forEach((v, n) => {
        const top = Math.round(y(+v.slice(1)));
        rect(Math.round(barX(start + n) - 3), top, 6, 789 - top, v[0] === 'g' ? '#3c8b40' : '#af2b36');
    });
}
rect(70, 739, 2, 50, '#af2b36');
volume(volA, 0, yA);
volume(volB, 115, yB);

// Liquidity dots
function dots(from, to, y, color, skip = []) {
    for (let i = from; i <= to; i++) {
        if (!skip.includes(i)) out += `<circle cx="${Math.max(70, barX(i) + .5)}" cy="${y}" r="2.8" fill="${color}" opacity=".85"/>`;
    }
}
dots(-1, 50, 554.5, '#4cea4c');
dots(52, 91, 545.5, '#4cea4c', [54, 55]);
dots(92, 112, 571.5, '#4cea4c', [111]);
dots(113, 152, 456.5, '#4cea4c', [114]);
dots(-1, 79, 688.5, '#e8403f');
dots(80, 152, 682.5, '#e8403f');

// Swing levels
[[82, 184, 541], [190, 332, 580], [70, 379, 468], [385, 399, 602], [351, 372, 651], [418, 433, 537], [438, 641, 509], [532, 641, 566],
    [646, 674, 566], [680, 816, 561], [807, 816, 577], [861, 903, 353], [915, 963, 277], [982, 1030, 205], [1042, 1051, 198], [1056, 1098, 188]]
    .forEach(l => line(l[0], l[2] + .5, l[1], l[2] + .5, '#dc4b52', 1.5));
[[70, 151, 673], [170, 280, 716], [284, 318, 732], [318, 587, 743], [117, 124, 615], [143, 151, 647], [478, 493, 652], [506, 574, 672],
    [600, 614, 684], [620, 628, 686], [640, 1097, 702], [721, 755, 674], [761, 1064, 676], [1069, 1077, 285]]
    .forEach(l => line(l[0], l[2] + .5, l[1], l[2] + .5, '#4f9650', 1.3));
line(70, 267, 1495, 267, '#2f62e0', 2);
line(70, 329.5, 1495, 329.5, '#222', 1, 'stroke-dasharray="1 3"');

// Moving average
const z5 = p => [60 + p[0] / 3, yA(p[1])];
const z6 = p => [440 + p[0] / 3, yA(p[1])];
const z7 = p => [800 + p[0] / 3, yB(p[1])];
poly([
    ...[[30, 384], [90, 395], [130, 412], [190, 430], [260, 460], [310, 488], [370, 516], [410, 516], [440, 532], [490, 575], [530, 592], [600, 627], [640, 645], [672, 673], [735, 679], [775, 689], [855, 720], [915, 735], [950, 740], [1015, 730], [1045, 707], [1100, 645]].map(z5),
    ...[[0, 597], [16, 572], [45, 542], [78, 520], [150, 497], [200, 486], [262, 484], [295, 478], [330, 478], [375, 495], [410, 518], [460, 555], [510, 572], [600, 588], [660, 588], [700, 596], [780, 590], [850, 588], [880, 582], [940, 568], [1000, 560], [1060, 553]].map(z6),
    ...[[0, 1137], [25, 1136], [45, 1140], [70, 1132], [105, 1111], [147, 1058], [187, 988], [247, 908], [310, 828], [365, 715], [430, 605], [447, 568], [508, 485], [548, 441], [570, 430], [635, 380], [708, 293], [730, 280], [752, 273], [790, 252], [850, 238], [870, 232], [891, 235]].map(z7)
], '#f4ad63', 2.4);

// Volume average
poly([
    ...[[30, 860], [70, 862], [130, 866], [190, 866], [230, 872], [260, 866], [290, 860], [310, 864], [330, 876], [375, 876], [410, 858], [440, 860], [490, 864], [530, 850], [560, 842], [600, 846], [640, 838], [680, 834], [740, 840], [790, 826], [815, 842], [850, 832], [910, 824], [940, 828], [980, 836], [1020, 832], [1055, 850]].map(z5),
    ...[[0, 850], [14, 852], [36, 872], [95, 870], [115, 863], [160, 874], [200, 876], [230, 874], [290, 882], [320, 878], [370, 880], [395, 886], [440, 878], [500, 878], [535, 890], [600, 882], [620, 858], [640, 862], [700, 845], [720, 830], [740, 825], [765, 836], [825, 832], [845, 824], [890, 830], [930, 832], [965, 828], [1000, 835], [1025, 864]].map(z6),
    ...[[0, 1394], [20, 1397], [45, 1414], [70, 1416], [105, 1407], [125, 1395], [145, 1397], [165, 1404], [200, 1397], [247, 1390], [290, 1398], [335, 1386], [365, 1369], [450, 1369], [490, 1364], [510, 1367], [530, 1380], [570, 1376], [610, 1373], [650, 1385], [700, 1384], [728, 1373], [770, 1394], [830, 1390], [870, 1382], [891, 1391], [912, 1394]].map(z7)
], '#f0e070', 1.5);
poly([[345, 640], [360, 644], [390, 648], [407, 649]], '#fff', 2, 'opacity=".8"');

// Projection arrow
poly([[1057, 266], [1190, 411], [1333, 246]], '#000', 2.4);
poly([[1316, 249], [1333, 246], [1333, 263]], '#000', 2.4);

// Candles: type, body top, body bottom, high, low
const candA = [
    'w339,410,306,410', 'b341,353,306,367', 'b345,349,336,383', 'b346,381,316,404', 'b382,441,367,449', 'w432,443,376,452', 'w420,433,381,524', 'w363,422,361,440',
    'b465,521,450,567', 'b521,573,468,602', 'w519,574,498,623', 'b521,543,514,614', 'b546,796,546,818', 'w768,797,753,818', 'w760,769,745,828', 'w706,760,694,800',
    'b708,719,657,721', 'w517,721,420,725', 'b514,564,432,576', 'b567,595,552,627', 'w573,596,567,614', 'b576,660,561,679', 'b662,666,648,714', 'w543,667,532,686',
    'b545,657,522,680', 'w567,658,498,658', 'b570,620,555,622', 'b623,660,600,690', 'w654,661,648,694', 'b657,798,627,804', 'b798,801,714,860', 'b804,852,798,876',
    'w801,844,798,864', 'b804,834,744,873', 'w792,835,747,858', 'b795,888,765,892', 'w724,890,693,909', 'w714,724,709,738', 'w744,790,738,830', 'w708,745,675,787',
    'b708,711,669,765', 'b710,742,636,746', 'b741,745,708,780', 'b743,747,712,760', 'w690,748,681,773', 'w606,691,598,710', 'w561,607,487,613', 'b564,591,534,600',
    'w532,592,487,620', 'w510,533,477,546', 'w441,509,426,512', 'w343,442,291,445', 'r345,372,318,402', 'b375,390,318,410', 'w277,391,208,391', 'b279,332,270,332',
    'P325,367,315,378', 'p331,362,294,393', 'b366,456,330,476', 'b459,563,435,563', 'b567,597,543,636', 'b600,602,588,636', 'b603,608,600,633', 'b606,681,606,696',
    'w580,683,573,698', 'b582,585,555,597', 'w546,584,495,621', 'b549,594,537,606', 'w432,470,378,489', 'b435,465,393,483', 'w450,467,414,486', 'b453,489,420,495',
    'b489,493,453,552', 'b495,513,471,534', 'b501,575,501,575', 'b579,630,567,635', 'w618,631,585,655', 'b621,671,621,714', 'w645,674,612,732', 'b648,674,633,697',
    'g687,699,672,727', 'w681,701,645,738', 'w645,683,612,683', 'b648,695,641,741', 'w681,697,663,785', 'w549,683,378,684', 'b522,528,432,554', 'b531,618,459,624',
    'w564,620,525,675', 'w540,566,480,570', 'w396,542,363,552', 'b399,423,375,438', 'r426,450,394,462', 'b453,500,429,528', 'b504,567,477,587', 'b570,636,555,636',
    'w627,638,594,702', 'w621,629,585,633', 'b522,578,504,585', 'w555,581,528,612', 'b558,572,528,597', 'b570,612,555,630', 'b615,648,591,708', 'w585,650,576,671',
    'b600,605,537,606', 'w558,608,549,627', 'b561,585,524,585', 'w531,587,486,618', 'w457,536,457,564', 'b459,513,411,518', 'w492,510,483,552', 'w312,494,294,510',
    'w228,315,165,318', 'R151,230,48,264'
];
const candB = [
    'w648,809,583,820', 'w632,649,576,661', 'w500,629,485,636', 'q502,590,475,617', 'Q547,592,544,632', 'c549,625,529,625', 'b627,649,554,698', 'b649,651,620,671',
    'b664,671,615,681', 'w583,673,571,676', 'w468,585,439,590', 'w316,469,287,483', 'b318,404,299,409', 'w370,406,345,408', 'b377,397,350,402', 'w377,399,373,448',
    'w358,380,314,399', 'b360,397,348,419', 'w328,396,306,441', 'w235,330,223,343', 'w184,239,154,239', 'b184,186,110,225', 'b186,294,186,328', 'w231,296,208,299',
    'b233,255,196,294', 'b257,296,247,318', 'w262,289,255,314', 'w206,264,164,269', 'b203,206,179,252', 'w105,206,103,257', 'b108,203,96,218', 'w186,206,157,218',
    'w132,196,71,213', 'b135,216,110,233', 'b218,274,189,309', 'w204,276,204,284', 'b206,301,206,343', 'b304,343,282,365', 'b341,372,309,404', 'b375,414,375,456'
];
const fills = { w: '#fff', b: '#000', r: '#e02020', R: '#c8141c', P: '#e873a8', p: '#d94f8c', q: '#e87fae', Q: '#cf4777', c: '#d81b60', g: '#35d335' };
const outlined = 'wPQR';
function candles(list, start, y) {
    list.forEach((c, n) => {
        const [top, bottom, high, low] = c.slice(1).split(',').map(v => Math.round(y(+v)));
        const x = Math.round(barX(start + n));
        rect(x - 2, top - 1, 5, Math.max(3, bottom - top + 2), '#fff');
        rect(x, high, 1, Math.max(1, low - high), '#000');
        if (outlined.includes(c[0])) {
            rect(x - 1.5, top + .5, 4, Math.max(1, bottom - top - 1), fills[c[0]], 'stroke="#000"');
        } else {
            rect(x - 1, top, 3, Math.max(1, bottom - top), fills[c[0]]);
        }
    });
}
candles(candA, 0, yA);
candles(candB, 114, yB);

// Sequence counts
[[178, 658, 8], [426, 598, 9], [419, 612, 8], [553, 629, 8], [608, 636, 8], [614, 650, 9], [687, 611, 8], [694, 618, 9], [835, 552, 9], [829, 569, 8]]
    .forEach(s => label(s[0], s[1], s[2], 'class="sig" text-anchor="middle"'));
[[425, 580], [419, 594], [553, 611], [687, 592], [694, 601], [835, 534], [828, 551]]
    .forEach(p => out += `<path d="M${p[0] - 3} ${p[1] + 2}l3-5 3 5z" fill="#127a12"/>`);
[[177, 665], [607, 645], [613, 658]]
    .forEach(p => out += `<path d="M${p[0] - 3} ${p[1] - 1}h6l-3 4z" fill="#d01818"/>`);

// Logo
out += '<path d="M85 753h15v19h-8v-11h-7zM112 753h11l-9 19h-9z" fill="#111" stroke="#fff" stroke-width="4" paint-order="stroke"/><circle cx="106" cy="757" r="4" fill="#111"/>';

// Calendar events
out += '<circle cx="1103" cy="773" r="12" fill="#fff" stroke="#8b2fa0" stroke-width="2"/><path d="M1106 766l-6 7h5l-3 7" stroke="#8b2fa0" stroke-width="2" fill="none"/>';
[1125, 1121, 1117, 1197, 1251].forEach(x => {
    out += `<circle cx="${x}" cy="773" r="12.500" fill="#fff" stroke="#e0474f" stroke-width="2"/>
        <circle cx="${x}" cy="773" r="9.500" fill="#fff"/>
        <path d="M${x} 766h7M${x} 770h9M${x - 9} 774h18M${x - 8} 778h16M${x - 4} 782h8" stroke="#e0474f" stroke-width="2"/>
        <path d="M${x - 9} 773a9.500 9.500 0 0 1 9-9.500v9.500z" fill="#3179c0"/>
        <path d="M${x - 6} 770h1M${x - 3} 767h1M${x - 3} 770h1" stroke="#fff"/>`;
});

// Price axis
rect(1495, 53, 90, 736, '#fff');
const ticks = ['4,560', '4,520', '4,480', '4,440', '4,400', '4,360', '4,320', '4,280', '4,240', '4,200', '4,160', '4,120', '4,080', '4,040'];
ticks.forEach((t, k) => {
    if (t === '4,320' || t === '4,400' || t === '4,080') return;
    label(1571, Math.round(69 + 45.27 * k), t + '.000', 'text-anchor="end"' + (t === '4,200' ? ' font-weight="bold"' : ''));
});
rect(1495, 362, 83, 18, '#fff');
label(1572, 376, '4,288.927', 'text-anchor="end"');
[[158, '4,449.830', '#ff0000'], [179, '4,449.830', '#ff0000'], [236, '4,390.810', '#ff7f00'], [257, '4,380.790', '#2962ff'], [298, '4,329.420', '#3aa8dc', '#131313'],
    [446, '4,213.540', '#00f700', '#131313'], [527, '4,142.242', '#ef3745'], [564, '4,109.805', '#ef3745'], [585, '4,092.993', '#808080'], [606, '4,080.957', '#0a967f'],
    [627, '4,070.085', '#ef3745'], [649, '4,051.442', '#808080'], [670, '4,050.777', '#808080'], [691, '4,039.720', '#0a967f'], [711, '4,029.650', '#0a967f'],
    [732, '4,021.325', '#ef3745'], [776, '4,010.691', '#808080'], [755, '4,013.975', '#ff0000']].forEach(p => {
    rect(1495, p[0], 83, 21, p[2], 'rx="1"');
    label(1572, p[0] + 15, p[1], `text-anchor="end" style="fill:${p[3] || '#fff'}"`);
});
rect(1495, 319, 83, 38, '#000');
label(1572, 334, '4,325.895', 'text-anchor="end" style="fill:#fff"');
label(1506, 351, '01:27:43', 'style="fill:#bbb"');

// Time axis
rect(70, 789, 1515, 35, '#fff');
days.forEach(d => label(d[0], 812, d[1], 'text-anchor="middle"' + (d[1] === 'Aug' ? ' font-weight="bold"' : '')));
out += '<path d="M1535 799h9l5 8-5 8h-9l-5-8z" stroke="#131313" stroke-width="1.500" fill="none"/><circle cx="1539.500" cy="807" r="2.500" stroke="#131313" stroke-width="1.300" fill="none"/>';

svg.innerHTML = out;
```
